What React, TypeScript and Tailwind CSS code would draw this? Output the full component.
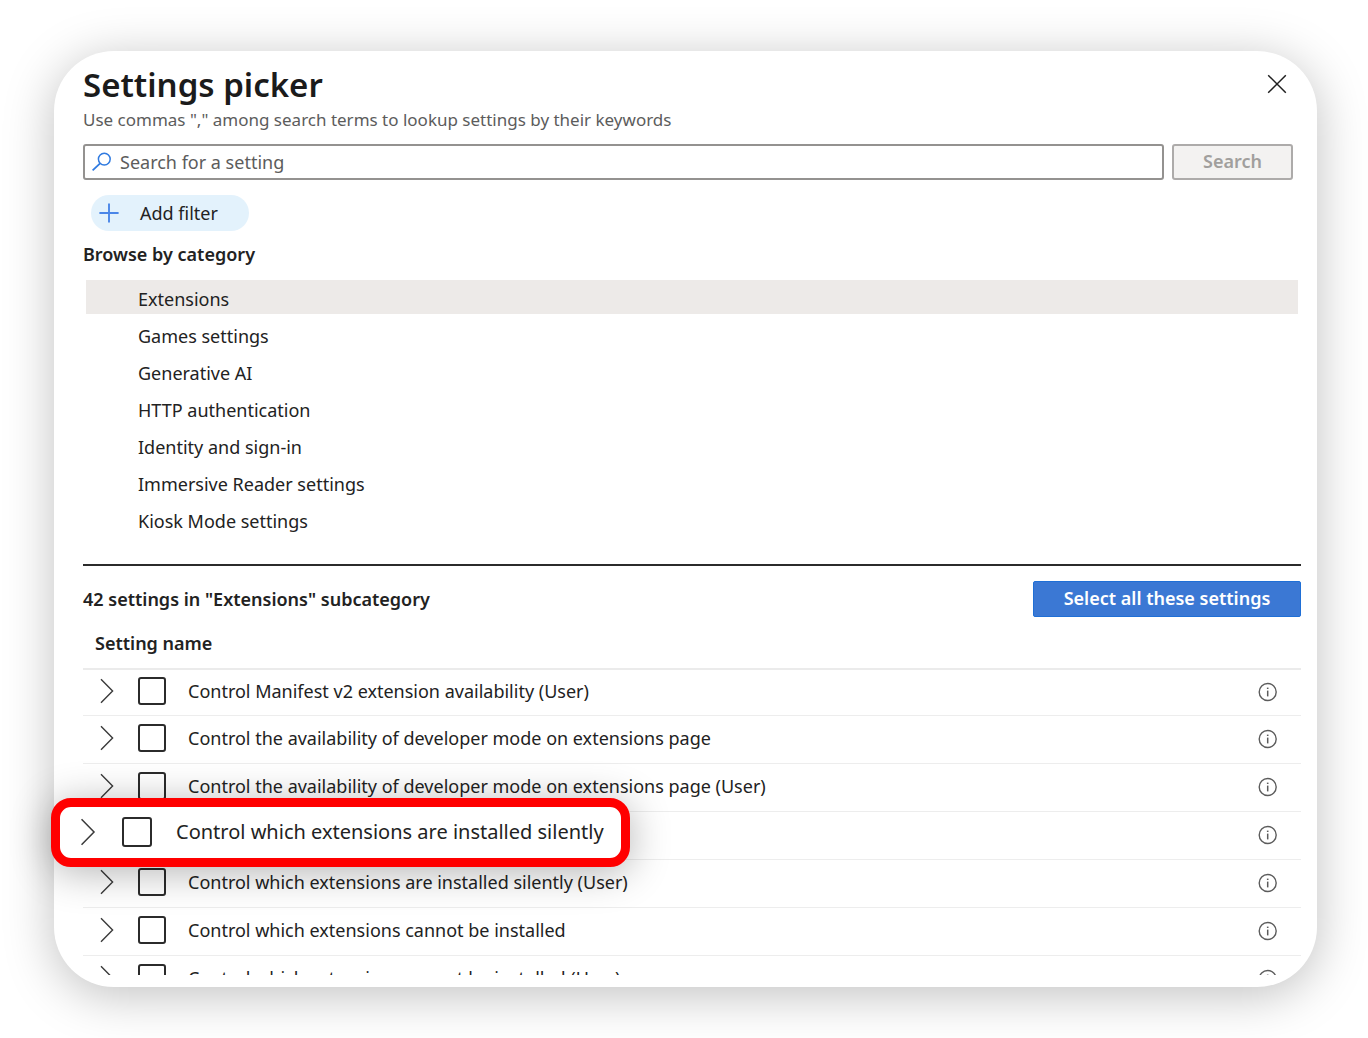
import React, { useState } from 'react';

interface Setting {
  name: string;
  highlighted?: boolean;
}

const categories = [
  'Extensions',
  'Games settings',
  'Generative AI',
  'HTTP authentication',
  'Identity and sign-in',
  'Immersive Reader settings',
  'Kiosk Mode settings',
];

const settings: Setting[] = [
  { name: 'Control Manifest v2 extension availability (User)' },
  { name: 'Control the availability of developer mode on extensions page' },
  { name: 'Control the availability of developer mode on extensions page (User)' },
  { name: 'Control which extensions are installed silently', highlighted: true },
  { name: 'Control which extensions are installed silently (User)' },
  { name: 'Control which extensions cannot be installed' },
  { name: 'Control which extensions cannot be installed (User)' },
];

const SearchIcon = () => (
  <svg className="h-5 w-5 shrink-0" viewBox="0 0 20 20" fill="none" stroke="#2f7ae0" strokeWidth="1.5">
    <circle cx="12.3" cy="7.1" r="5.9" />
    <path d="M8.1 11.3L0.6 18.4" strokeWidth="1.8" />
  </svg>
);

const PlusIcon = () => (
  <svg className="h-5 w-5 shrink-0" viewBox="0 0 20 20" fill="none" stroke="#4a86e8" strokeWidth="1.9">
    <path d="M10 0.4V19.6M0.4 10H19.6" />
  </svg>
);

const CloseIcon = () => (
  <svg className="h-5 w-5" viewBox="0 0 20 20" fill="none" stroke="#1f1f1f" strokeWidth="1.5">
    <path d="M1.2 1.2L18.8 18.8M18.8 1.2L1.2 18.8" />
  </svg>
);

const InfoIcon = () => (
  <svg className="h-5 w-5" viewBox="0 0 20 20" fill="none" stroke="#5c5c5c">
    <circle cx="9.7" cy="10" r="8.5" strokeWidth="1.4" />
    <path d="M9.7 8.6V14.4" strokeWidth="1.5" />
    <path d="M9.7 5.6V7" strokeWidth="1.6" />
  </svg>
);

const ChevronIcon = ({ className }: { className: string }) => (
  <svg className={className} viewBox="0 0 14 26" fill="none" stroke="#3a3a3a" strokeWidth="1.4">
    <path d="M1 1.2L12.6 13L1 24.8" />
  </svg>
);

const SettingRow: React.FC<{ setting: Setting }> = ({ setting }) => {
  const { name, highlighted } = setting;

  return (
    <tr className="h-12 border-b border-[#ededed] first:h-[46px]">
      <td className="relative p-0">
        {highlighted ? (
          <div className="absolute -top-[14px] -left-8 z-10 flex h-[69px] w-[579px] items-center rounded-[20px] border-[9px] border-[#ff0000] bg-white pl-5 shadow-[0_5px_40px_rgba(0,0,0,0.3)]">
            <button type="button" aria-label={`Expand ${name}`}>
              <ChevronIcon className="h-7 w-4" />
            </button>
            <label className="flex items-center text-[20px] leading-7 whitespace-nowrap">
              <input
                type="checkbox"
                className="mr-6 ml-[26px] h-[30px] w-[30px] shrink-0 appearance-none rounded-[3px] border-2 border-[#2b2b2b]"
              />
              {name}
            </label>
          </div>
        ) : (
          <div className="flex items-center pb-[3px] pl-[17px]">
            <button type="button" aria-label={`Expand ${name}`}>
              <ChevronIcon className="h-[26px] w-[14px]" />
            </button>
            <label className="flex items-center whitespace-nowrap">
              <input
                type="checkbox"
                className="mr-[22px] ml-6 h-7 w-7 shrink-0 appearance-none rounded-[3px] border-2 border-[#2b2b2b]"
              />
              {name}
            </label>
          </div>
        )}
      </td>
      <td className="w-[43px] p-0">
        <button type="button" aria-label={`About ${name}`} className="block">
          <InfoIcon />
        </button>
      </td>
    </tr>
  );
};

const App: React.FC = () => {
  const [selected, setSelected] = useState('Extensions');

  return (
    <div className="bg-white pt-[51px] pr-[51px] pb-[51px] pl-[54px] font-['Noto_Sans',sans-serif] text-[18px] leading-6 text-[#222]">
      <main className="rounded-[60px] bg-white pt-[11px] pr-4 pb-3 pl-[29px] shadow-[0_8px_50px_rgba(0,0,0,0.25)]">
        <header className="flex items-start justify-between pr-[14px]">
          <div>
            <h1 className="text-[33px] leading-[46px] font-semibold text-[#1b1b1b]">Settings picker</h1>
            <p className="text-[17px] text-[#5c5c5c]">
              Use commas "," among search terms to lookup settings by their keywords
            </p>
          </div>
          <button type="button" aria-label="Close" className="mt-3">
            <CloseIcon />
          </button>
        </header>

        <form className="mt-3 flex gap-2 pr-2" onSubmit={(e) => e.preventDefault()}>
          <label className="flex h-9 flex-1 items-center gap-2 rounded-[3px] border-2 border-[#949290] pl-[7px]">
            <SearchIcon />
            <input
              type="text"
              aria-label="Search for a setting"
              placeholder="Search for a setting"
              className="min-w-0 flex-1 outline-none placeholder:text-[#5c5c5c]"
            />
          </label>
          <button
            type="submit"
            disabled
            className="h-9 w-[121px] rounded-[3px] border-2 border-[#adabaa] bg-[#f3f2f1] pb-[2px] font-semibold text-[#a19f9d]"
          >
            Search
          </button>
        </form>

        <button type="button" className="mt-[15px] ml-2 flex h-9 items-center gap-[21px] rounded-full bg-[#e3f2fc] pr-[31px] pl-2">
          <PlusIcon />
          Add filter
        </button>

        <h2 className="mt-[11px] font-semibold">Browse by category</h2>
        <ul className="mx-[3px] mt-[14px] flex flex-col gap-[3px]">
          {categories.map((category) => (
            <li key={category}>
              <button
                type="button"
                onClick={() => setSelected(category)}
                className={`flex h-[34px] w-full items-center pt-1 pl-[52px] ${category === selected ? 'bg-[#edeae8]' : ''}`}
              >
                {category}
              </button>
            </li>
          ))}
        </ul>

        <section className="mt-[28px] border-t-2 border-[#2b2b2b] pt-[15px]">
          <div className="flex items-center justify-between">
            <h2 className="font-semibold">42 settings in "Extensions" subcategory</h2>
            <button
              type="button"
              className="h-9 w-[268px] rounded-[2px] border border-[#1f6fd6] bg-[#3b78d4] pb-[2px] font-semibold text-white"
            >
              Select all these settings
            </button>
          </div>
          <div className="h-[358px] overflow-y-clip">
            <table className="w-full border-collapse">
              <thead>
                <tr className="h-[52px] border-b-2 border-[#ebebeb]">
                  <th colSpan={2} className="p-0 pl-3 text-left font-semibold">
                    Setting name
                  </th>
                </tr>
              </thead>
              <tbody>
                {settings.map((setting) => (
                  <SettingRow key={setting.name} setting={setting} />
                ))}
              </tbody>
            </table>
          </div>
        </section>
      </main>
    </div>
  );
};

export default App;
